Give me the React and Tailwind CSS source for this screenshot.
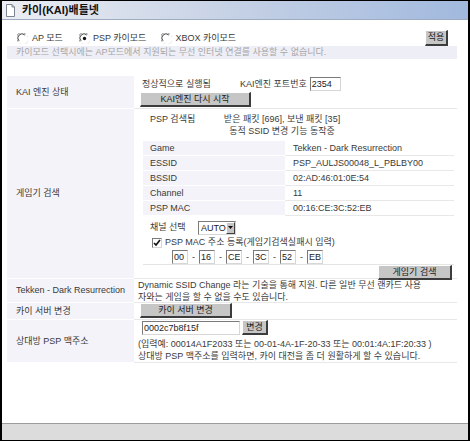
import React from 'react';

// classic raised button
const Btn = ({ className = '', children }) => (
    <button className={`flex items-center justify-center bg-[#c6c6c6] border border-t-white border-l-white border-r-2 border-b-2 border-r-[#3c3c3c] border-b-[#3c3c3c] text-[#222] ${className}`}>
        {children}
    </button>
);

// sunken text box
const Field = ({ value, className = '' }) => (
    <input
        readOnly
        value={value}
        className={`h-[14px] px-[1px] bg-white border border-[#7a7a7a] border-r-[#d6d6d6] border-b-[#d6d6d6] text-[9px] leading-[12px] text-[#222] outline-none ${className}`}
    />
);

const Radio = ({ checked }) => (
    <svg width="11" height="11" viewBox="0 0 12 12" className="shrink-0">
        <circle cx="6" cy="6" r="5.5" fill="#fff" />
        <path d="M1.2 9.5A5.5 5.5 0 0 1 9.5 1.2" fill="none" stroke="#808080" strokeWidth="1" />
        <path d="M2.3 8.6A4.3 4.3 0 0 1 8.6 2.3" fill="none" stroke="#404040" strokeWidth="1" />
        <path d="M10.8 2.5A5.5 5.5 0 0 1 2.5 10.8" fill="none" stroke="#e6e6e6" strokeWidth="1" />
        {checked && <circle cx="6" cy="6" r="1.8" fill="#111" />}
    </svg>
);

const DocIcon = () => (
    <svg width="11" height="13" viewBox="0 0 11 13" className="shrink-0">
        <path d="M1.5 0.5h5.5l2.5 2.5v9.5h-8z" fill="#fff" stroke="#7d8593" />
        <path d="M7 0.5v2.5h2.5" fill="none" stroke="#7d8593" />
    </svg>
);

const Row = ({ label, children, className = '' }) => (
    <div className="flex">
        <div className={`w-[127px] shrink-0 flex items-center pl-[9px] bg-[#f3f3f9] border-b border-white ${className}`}>
            {label}
        </div>
        <div className="flex-1 border-b border-[#e8e8e8]">{children}</div>
    </div>
);

const consoleInfo = [
    ['Game', 'Tekken - Dark Resurrection'],
    ['ESSID', 'PSP_AULJS00048_L_PBLBY00'],
    ['BSSID', '02:AD:46:01:0E:54'],
    ['Channel', '11'],
    ['PSP MAC', '00:16:CE:3C:52:EB'],
];

const macParts = ['00', '16', 'CE', '3C', '52', 'EB'];

export default function App() {
    return (
        <div className="w-[470px] h-[441px] flex flex-col border-x-2 border-y border-black bg-white text-[9px] leading-[13px] text-[#3a3a3a] font-['Liberation_Sans','Noto_Sans_CJK_KR',sans-serif]">
            <div className="h-[19px] shrink-0 flex items-center gap-[6px] pl-[3px] bg-gradient-to-r from-[#eceef3] via-[#c5d1e5] to-[#a1b9de] border-b border-[#9eacc2]">
                <DocIcon />
                <span className="font-bold text-[11px] text-[#111]">카이(KAI)배틀넷</span>
            </div>

            <div className="flex-1 pl-[5px] pr-[11px] pt-[10px]">
                {/* mode selection */}
                <div className="h-[16px] flex items-center pl-[10px]">
                    <div className="flex items-center gap-[4px]">
                        <Radio />
                        <span>AP 모드</span>
                    </div>
                    <div className="flex items-center gap-[3px] ml-[16px]">
                        <Radio checked />
                        <span>PSP 카이모드</span>
                    </div>
                    <div className="flex items-center gap-[3px] ml-[15px]">
                        <Radio />
                        <span>XBOX 카이모드</span>
                    </div>
                    <Btn className="ml-auto mr-[9px] w-[23px] h-[16px]">적용</Btn>
                </div>
                <div className="h-[13px] flex items-center pl-[9px] bg-[#eeeef7] text-[#a6a6a6]">
                    카이모드 선택시에는 AP모드에서 지원되는 무선 인터넷 연결를 사용할 수 없습니다.
                </div>

                <div className="mt-[17px]">
                    <Row label="KAI 엔진 상태">
                        <div className="h-[32px] pl-[6px] flex flex-col">
                            <div className="h-[16px] flex items-center pl-[2px]">
                                <span className="w-[98px]">정상적으로 실행됨</span>
                                <span>KAI엔진 포트번호</span>
                                <Field value="2354" className="ml-[3px] w-[31px]" />
                            </div>
                            <Btn className="w-[111px] h-[15px]">KAI엔진 다시 시작</Btn>
                        </div>
                    </Row>

                    <Row label="게임기 검색">
                        <div className="h-[169px] flex flex-col">
                            <div className="flex pt-[4px] leading-[12px]">
                                <span className="pl-[16px] w-[83px]">PSP 검색됨</span>
                                <div className="w-[130px] text-center">
                                    받은 패킷 [696], 보낸 패킷 [35]
                                    <br />
                                    동적 SSID 변경 기능 동작중
                                </div>
                            </div>

                            <div className="mt-[4px] ml-[9px] mr-[3px]">
                                {consoleInfo.map(([k, v]) => (
                                    <div key={k} className="flex h-[15px]">
                                        <div className="w-[142px] flex items-center pl-[7px] bg-[#f3f3f9] border-b border-white">{k}</div>
                                        <div className="flex-1 flex items-center pl-[8px] border-b border-[#e8e8e8]">{v}</div>
                                    </div>
                                ))}
                            </div>

                            <div className="ml-[9px] mr-[3px] h-[51px] border-b border-[#e4e4e4] flex flex-col pt-[4px]">
                                <div className="h-[15px] flex items-center pl-[7px]">
                                    <span className="w-[48px]">채널 선택</span>
                                    <div className="flex h-[14px] w-[38px] border border-[#7a7a7a] border-r-[#d6d6d6] border-b-[#d6d6d6] bg-white">
                                        <span className="flex-1 pl-[2px] leading-[12px] text-[#222]">AUTO</span>
                                        <span className="w-[11px] flex items-center justify-center bg-[#c6c6c6] border border-t-white border-l-white border-r-[#404040] border-b-[#404040]">
                                            <svg width="5" height="3" viewBox="0 0 5 3">
                                                <path d="M0 0h5L2.5 3z" fill="#111" />
                                            </svg>
                                        </span>
                                    </div>
                                </div>
                                <div className="h-[15px] flex items-center pl-[9px] gap-[3px]">
                                    <span className="w-[10px] h-[10px] bg-white border border-[#7a7a7a] border-r-[#d6d6d6] border-b-[#d6d6d6] flex items-center justify-center">
                                        <svg width="8" height="8" viewBox="0 0 8 8">
                                            <path d="M1 4l2 2 4-5" fill="none" stroke="#111" strokeWidth="1.6" />
                                        </svg>
                                    </span>
                                    <span>PSP MAC 주소 등록(게임기검색실패시 입력)</span>
                                </div>
                                <div className="h-[14px] flex items-center pl-[29px]">
                                    {macParts.map((p, i) => (
                                        <React.Fragment key={p}>
                                            {i > 0 && <span className="w-[11px] text-center">-</span>}
                                            <Field value={p} className="w-[16px] h-[13px]" />
                                        </React.Fragment>
                                    ))}
                                </div>
                            </div>

                            <div className="flex justify-end pr-[5px] mt-auto">
                                <Btn className="w-[74px] h-[15px]">게임기 검색</Btn>
                            </div>
                        </div>
                    </Row>

                    <Row label="Tekken - Dark Resurrection">
                        <div className="h-[23px] pl-[4px] leading-[12px] flex flex-col justify-center">
                            <span>Dynamic SSID Change 라는 기술을 통해 지원. 다른 일반 무선 랜카드 사용</span>
                            <span>자와는 게임을 할 수 없을 수도 있습니다.</span>
                        </div>
                    </Row>

                    <Row label="카이 서버 변경">
                        <div className="h-[16px] pl-[6px]">
                            <Btn className="w-[92px] h-[15px]">카이 서버 변경</Btn>
                        </div>
                    </Row>

                    <Row label="상대방 PSP 맥주소">
                        <div className="h-[42px] flex flex-col">
                            <div className="flex items-center gap-[2px] pl-[8px]">
                                <Field value="0002c7b8f15f" className="w-[98px]" />
                                <Btn className="w-[26px] h-[15px]">변경</Btn>
                            </div>
                            <div className="pl-[4px] pt-[3px] leading-[12px]">
                                (입력예: 00014A1F2033 또는 00-01-4A-1F-20-33 또는 00:01:4A:1F:20:33 )
                                <br />
                                상대방 PSP 맥주소를 입력하면, 카이 대전을 좀 더 원활하게 할 수 있습니다.
                            </div>
                        </div>
                    </Row>
                </div>
            </div>

            <div className="h-[17px] shrink-0 bg-[#dcdcdc] border-t border-[#9c9c9c]" />
        </div>
    );
}
